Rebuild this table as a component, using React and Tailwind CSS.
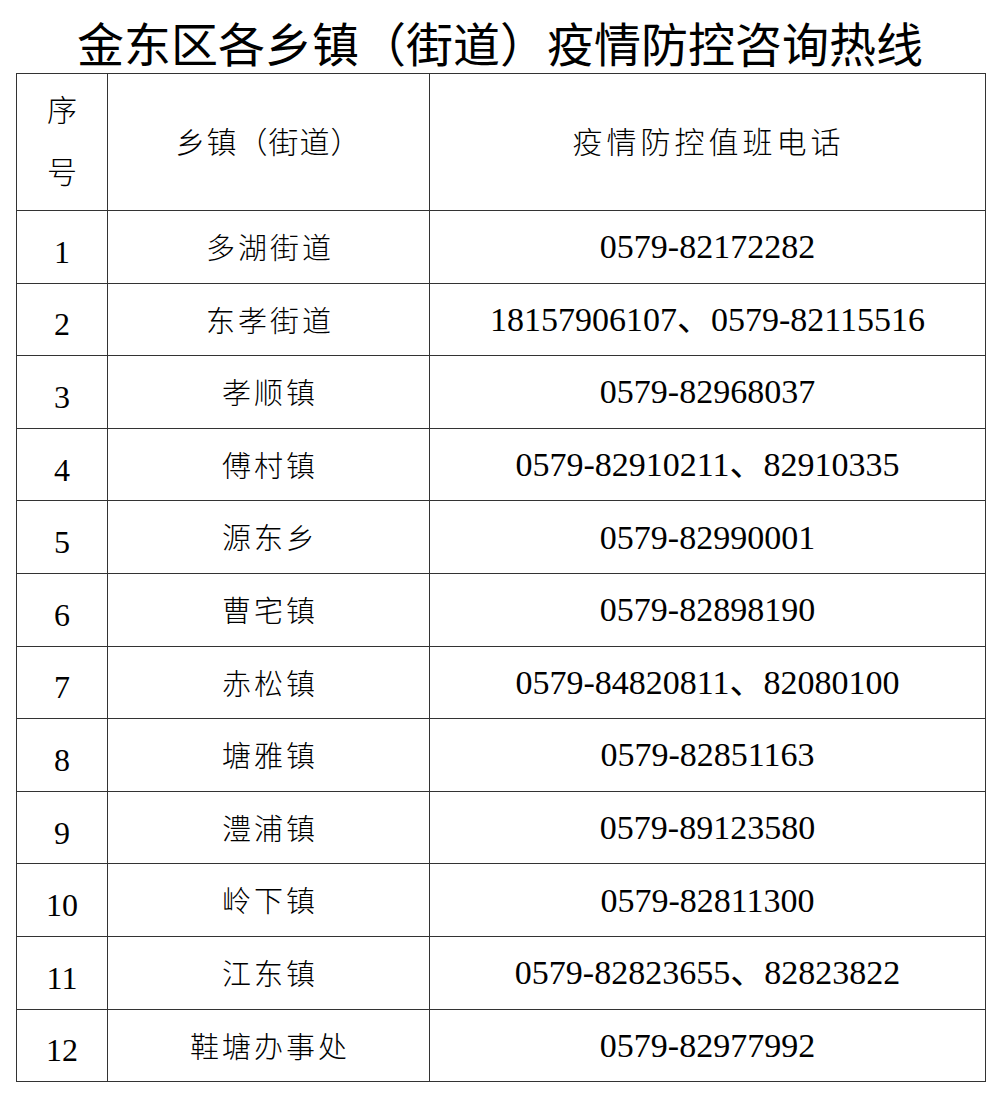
const rows = [
  ["1", "多湖街道", "0579-82172282"],
  ["2", "东孝街道", "18157906107、0579-82115516"],
  ["3", "孝顺镇", "0579-82968037"],
  ["4", "傅村镇", "0579-82910211、82910335"],
  ["5", "源东乡", "0579-82990001"],
  ["6", "曹宅镇", "0579-82898190"],
  ["7", "赤松镇", "0579-84820811、82080100"],
  ["8", "塘雅镇", "0579-82851163"],
  ["9", "澧浦镇", "0579-89123580"],
  ["10", "岭下镇", "0579-82811300"],
  ["11", "江东镇", "0579-82823655、82823822"],
  ["12", "鞋塘办事处", "0579-82977992"],
];

const serif = "font-['Liberation_Serif','Noto_Sans_CJK_SC',serif]";
const cjk = "font-['Noto_Sans_CJK_SC',sans-serif]";

export default function App() {
  return (
    <div className="w-[1000px] h-[1095px] bg-white text-black">
      <h1
        className={`h-[73px] pt-[10px] flex items-center justify-center text-[47px] leading-none font-normal ${cjk}`}
      >
        金东区各乡镇（街道）疫情防控咨询热线
      </h1>
      <table className="ml-[16px] w-[970px] border-collapse table-fixed">
        <colgroup>
          <col className="w-[91px]" />
          <col className="w-[322px]" />
          <col />
        </colgroup>
        <thead>
          <tr className="h-[137px]">
            <th className={`border border-[#333] font-light text-[30px] ${cjk}`}>
              <div className="flex flex-col items-center gap-[32px] leading-none pb-[6px]">
                <span>序</span>
                <span>号</span>
              </div>
            </th>
            <th className={`border border-[#333] font-light text-[30px] tracking-[1px] pb-[4px] ${cjk}`}>
              乡镇（街道）
            </th>
            <th className={`border border-[#333] font-light text-[30px] tracking-[4px] pb-[4px] pl-[2px] ${cjk}`}>
              疫情防控值班电话
            </th>
          </tr>
        </thead>
        <tbody>
          {rows.map(([n, name, phone]) => (
            <tr key={n} className="h-[72.6px]">
              <td className={`border border-[#333] text-center text-[32px] pt-[10px] ${serif}`}>{n}</td>
              <td className={`border border-[#333] text-center text-[29px] font-light tracking-[3px] pl-[3px] ${cjk}`}>
                {name}
              </td>
              <td className={`border border-[#333] text-center text-[34px] ${serif}`}>{phone}</td>
            </tr>
          ))}
        </tbody>
      </table>
    </div>
  );
}
